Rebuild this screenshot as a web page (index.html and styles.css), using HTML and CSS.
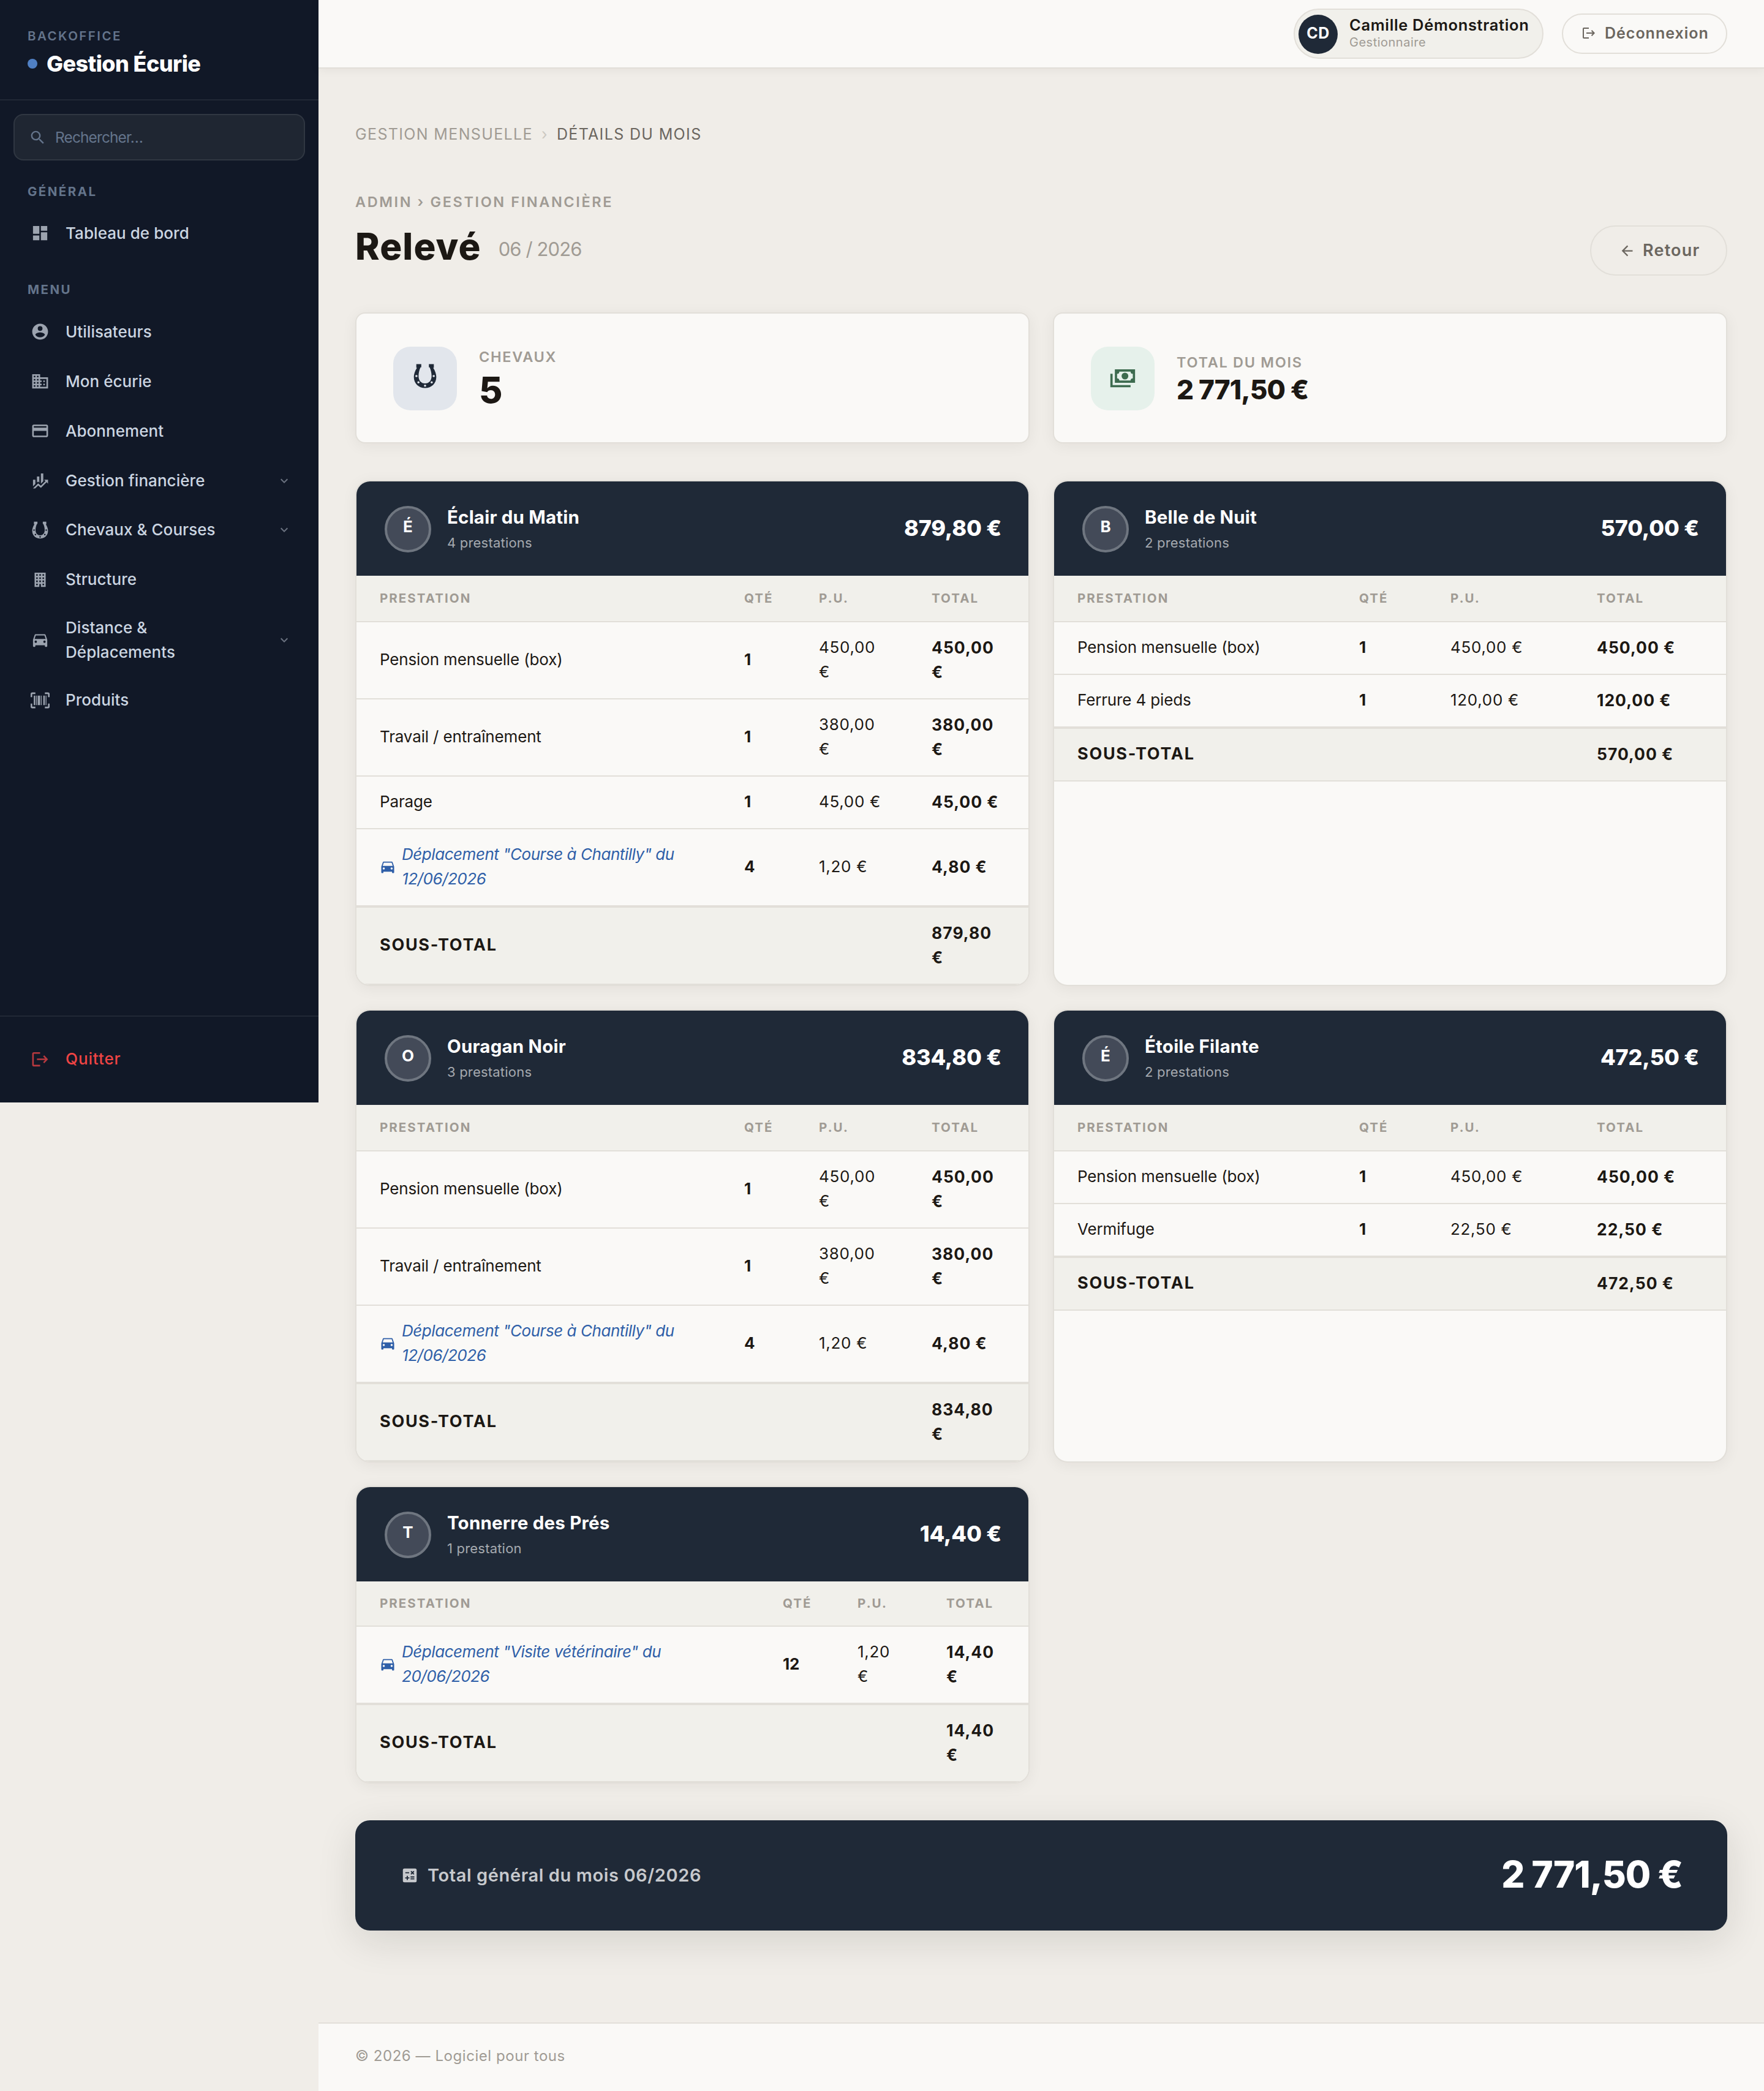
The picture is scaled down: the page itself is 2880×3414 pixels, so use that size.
FILE: index.html
```html
<!DOCTYPE html>
<html lang="fr">
<head>
    <meta charset="UTF-8">
    <meta name="viewport" content="width=device-width, initial-scale=1.0">
    <title>Relevé 06/2026 - Gestion Écurie</title>
    <link rel="stylesheet" href="styles.css">
</head>
<body>
    <!-- Icon set -->
    <svg class="sprite" aria-hidden="true">
        <symbol id="i-search" viewBox="0 0 24 24"><path d="M9.5,3A6.5,6.5 0 0,1 16,9.5C16,11.11 15.41,12.59 14.44,13.73L14.71,14H15.5L20.5,19L19,20.5L14,15.5V14.71L13.73,14.44C12.59,15.41 11.11,16 9.5,16A6.5,6.5 0 0,1 3,9.5A6.5,6.5 0 0,1 9.5,3M9.5,5C7,5 5,7 5,9.5C5,12 7,14 9.5,14C12,14 14,12 14,9.5C14,7 12,5 9.5,5Z"/></symbol>
        <symbol id="i-dashboard" viewBox="0 0 24 24"><path d="M13,3V9H21V3M13,21H21V11H13M3,21H11V15H3M3,13H11V3H3V13Z"/></symbol>
        <symbol id="i-account" viewBox="0 0 24 24"><path d="M12,19.2C9.5,19.2 7.29,17.92 6,16C6.03,14 10,12.9 12,12.9C14,12.9 17.97,14 18,16C16.71,17.92 14.5,19.2 12,19.2M12,5A3,3 0 0,1 15,8A3,3 0 0,1 12,11A3,3 0 0,1 9,8A3,3 0 0,1 12,5M12,2A10,10 0 0,0 2,12A10,10 0 0,0 12,22A10,10 0 0,0 22,12C22,6.47 17.5,2 12,2Z"/></symbol>
        <symbol id="i-domain" viewBox="0 0 24 24"><path d="M18,15H16V17H18M18,11H16V13H18M20,19H12V17H14V15H12V13H14V11H12V9H20M10,7H8V5H10M10,11H8V9H10M10,15H8V13H10M10,19H8V17H10M6,7H4V5H6M6,11H4V9H6M6,15H4V13H6M6,19H4V17H6M12,7V3H2V21H22V7H12Z"/></symbol>
        <symbol id="i-card" viewBox="0 0 24 24"><path d="M20,8H4V6H20M20,18H4V12H20M20,4H4C2.89,4 2,4.89 2,6V18C2,19.1 2.9,20 4,20H20C21.1,20 22,19.1 22,18V6C22,4.89 21.1,4 20,4Z"/></symbol>
        <symbol id="i-finance" viewBox="0 0 24 24"><path d="M6,16.5L3,19.44V11H6M11,14.66L9.43,13.32L8,14.64V7H11M16,13L13,16V3H16M18.81,12.81L17,11H22V16L20.21,14.21L13,21.36L9.53,18.34L5.75,22H3L9.47,15.66L13,18.64"/></symbol>
        <symbol id="i-horseshoe" viewBox="0 0 24 24"><path fill-rule="evenodd" d="M4.2,1.4H8.6V4.2H7.9C6.8,6.8 6.2,9.4 6.2,12C6.2,15.8 8.4,18.6 12,18.6C15.6,18.6 17.8,15.8 17.8,12C17.8,9.4 17.2,6.8 16.1,4.2H15.4V1.4H19.8V4.6H19.2C21,7.4 22,10.2 22,12.8C22,18.6 17.8,22.6 12,22.6C6.2,22.6 2,18.6 2,12.8C2,10.2 3,7.4 4.8,4.6H4.2ZM4.3,11A1,1 0 0,0 4.3,13A1,1 0 0,0 4.3,11ZM19.7,11A1,1 0 0,0 19.7,13A1,1 0 0,0 19.7,11ZM6.1,16.6A1,1 0 0,0 6.1,18.6A1,1 0 0,0 6.1,16.6ZM17.9,16.6A1,1 0 0,0 17.9,18.6A1,1 0 0,0 17.9,16.6ZM12,19.6A1,1 0 0,0 12,21.6A1,1 0 0,0 12,19.6Z"/></symbol>
        <symbol id="i-building" viewBox="0 0 24 24"><path d="M5,3V21H11V17.5H13V21H19V3H5M7,5H9V7H7V5M11,5H13V7H11V5M15,5H17V7H15V5M7,9H9V11H7V9M11,9H13V11H11V9M15,9H17V11H15V9M7,13H9V15H7V13M11,13H13V15H11V13M15,13H17V15H15V13M7,17H9V19H7V17M15,17H17V19H15V17Z"/></symbol>
        <symbol id="i-car" viewBox="0 0 24 24"><path d="M5,11L6.5,6.5H17.5L19,11M17.5,16A1.5,1.5 0 0,1 16,14.5A1.5,1.5 0 0,1 17.5,13A1.5,1.5 0 0,1 19,14.5A1.5,1.5 0 0,1 17.5,16M6.5,16A1.5,1.5 0 0,1 5,14.5A1.5,1.5 0 0,1 6.5,13A1.5,1.5 0 0,1 8,14.5A1.5,1.5 0 0,1 6.5,16M18.92,6C18.72,5.42 18.16,5 17.5,5H6.5C5.84,5 5.28,5.42 5.08,6L3,12V20A1,1 0 0,0 4,21H5A1,1 0 0,0 6,20V19H18V20A1,1 0 0,0 19,21H20A1,1 0 0,0 21,20V12L18.92,6Z"/></symbol>
        <symbol id="i-barcode" viewBox="0 0 24 24"><path d="M4,6H6V18H4V6M7,6H8V18H7V6M9,6H12V18H9V6M13,6H14V18H13V6M16,6H18V18H16V6M19,6H20V18H19V6M2,4V8H0V4A2,2 0 0,1 2,2H6V4H2M22,2A2,2 0 0,1 24,4V8H22V4H18V2H22M2,16V20H6V22H2A2,2 0 0,1 0,20V16H2M22,20V16H24V20A2,2 0 0,1 22,22H18V20H22Z"/></symbol>
        <symbol id="i-chevron" viewBox="0 0 24 24"><path d="M7.41,8.58L12,13.17L16.59,8.58L18,10L12,16L6,10L7.41,8.58Z"/></symbol>
        <symbol id="i-logout" viewBox="0 0 24 24"><path d="M12,3V5H4V19H12V21H4A2,2 0 0,1 2,19V5A2,2 0 0,1 4,3M17.2,7L22,12L17.2,17L15.8,15.6L18.3,13H8V11H18.3L15.8,8.4Z"/></symbol>
        <symbol id="i-back" viewBox="0 0 24 24"><path d="M20,11V13H8L13.5,18.5L12.08,19.92L4.16,12L12.08,4.08L13.5,5.5L8,11H20Z"/></symbol>
        <symbol id="i-cash" viewBox="0 0 24 24"><path d="M5,6H23V18H5V6M14,9A3,3 0 0,1 17,12A3,3 0 0,1 14,15A3,3 0 0,1 11,12A3,3 0 0,1 14,9M9,8A2,2 0 0,1 7,10V14A2,2 0 0,1 9,16H19A2,2 0 0,1 21,14V10A2,2 0 0,1 19,8H9M1,10H3V20H19V22H1V10Z"/></symbol>
        <symbol id="i-calc" viewBox="0 0 24 24"><path fill-rule="evenodd" d="M5,3H19A2,2 0 0,1 21,5V19A2,2 0 0,1 19,21H5A2,2 0 0,1 3,19V5A2,2 0 0,1 5,3ZM6.2,7.7V9.2H11.2V7.7ZM13,15.7V17.2H18V15.7ZM13,13.2V14.7H18V13.2ZM8,18H9.5V16H11.5V14.5H9.5V12.5H8V14.5H6V16H8ZM14.1,10.9L15.5,9.5L16.9,10.9L18,9.9L16.5,8.5L18,7.1L16.9,6L15.5,7.4L14.1,6L13,7.1L14.5,8.5L13,9.9Z"/></symbol>
    </svg>

    <div class="layout">
        <aside class="sidebar">
            <div class="brand">
                <div class="brand-label">Backoffice</div>
                <div class="brand-name"><span class="brand-dot"></span>Gestion Écurie</div>
            </div>

            <div class="search">
                <svg class="icon"><use href="#i-search"/></svg>
                <span>Rechercher…</span>
            </div>

            <div class="nav-label">Général</div>
            <nav class="nav">
                <a class="nav-item"><svg class="icon"><use href="#i-dashboard"/></svg><span>Tableau de bord</span></a>
            </nav>

            <div class="nav-label nav-label-menu">Menu</div>
            <nav class="nav">
                <a class="nav-item"><svg class="icon"><use href="#i-account"/></svg><span>Utilisateurs</span></a>
                <a class="nav-item"><svg class="icon"><use href="#i-domain"/></svg><span>Mon écurie</span></a>
                <a class="nav-item"><svg class="icon"><use href="#i-card"/></svg><span>Abonnement</span></a>
                <a class="nav-item"><svg class="icon"><use href="#i-finance"/></svg><span>Gestion financière</span><svg class="chevron"><use href="#i-chevron"/></svg></a>
                <a class="nav-item"><svg class="icon"><use href="#i-horseshoe"/></svg><span>Chevaux &amp; Courses</span><svg class="chevron"><use href="#i-chevron"/></svg></a>
                <a class="nav-item"><svg class="icon"><use href="#i-building"/></svg><span>Structure</span></a>
                <a class="nav-item"><svg class="icon"><use href="#i-car"/></svg><span>Distance &amp;<br>Déplacements</span><svg class="chevron"><use href="#i-chevron"/></svg></a>
                <a class="nav-item"><svg class="icon"><use href="#i-barcode"/></svg><span>Produits</span></a>
            </nav>

            <div class="sidebar-footer">
                <a class="nav-item quit"><svg class="icon"><use href="#i-logout"/></svg><span>Quitter</span></a>
            </div>
        </aside>

        <div class="main">
            <header class="topbar">
                <div class="user-pill">
                    <div class="user-avatar">CD</div>
                    <div class="user-info">
                        <div class="user-name">Camille Démonstration</div>
                        <div class="user-role">Gestionnaire</div>
                    </div>
                </div>
                <a class="logout"><svg><use href="#i-logout"/></svg><span>Déconnexion</span></a>
            </header>

            <main class="content">
                <div class="breadcrumb">
                    <span>Gestion mensuelle</span>
                    <span class="sep">›</span>
                    <span class="current">Détails du mois</span>
                </div>

                <div class="page-header">
                    <div>
                        <div class="page-path">Admin › Gestion financière</div>
                        <h1 class="page-title">Relevé <small>06 / 2026</small></h1>
                    </div>
                    <a class="btn-back"><svg><use href="#i-back"/></svg>Retour</a>
                </div>

                <div class="stats">
                    <div class="stat">
                        <div class="stat-icon"><svg><use href="#i-horseshoe"/></svg></div>
                        <div>
                            <div class="stat-label">Chevaux</div>
                            <div class="stat-value">5</div>
                        </div>
                    </div>
                    <div class="stat">
                        <div class="stat-icon green"><svg><use href="#i-cash"/></svg></div>
                        <div>
                            <div class="stat-label">Total du mois</div>
                            <div class="stat-value amount">2 771,50 €</div>
                        </div>
                    </div>
                </div>

                <div class="horses">
                    <section class="horse">
                        <div class="horse-head">
                            <div class="horse-avatar">É</div>
                            <div class="horse-info">
                                <div class="horse-name">Éclair du Matin</div>
                                <div class="horse-count">4 prestations</div>
                            </div>
                            <div class="horse-total">879,80 €</div>
                        </div>
                        <table class="lines">
                            <thead><tr><th>Prestation</th><th class="qty">Qté</th><th class="price">P.U.</th><th class="total">Total</th></tr></thead>
                            <tbody>
                                <tr><td>Pension mensuelle (box)</td><td>1</td><td>450,00 €</td><td>450,00 €</td></tr>
                                <tr><td>Travail / entraînement</td><td>1</td><td>380,00 €</td><td>380,00 €</td></tr>
                                <tr><td>Parage</td><td>1</td><td>45,00 €</td><td>45,00 €</td></tr>
                                <tr><td><div class="trip"><svg><use href="#i-car"/></svg><span>Déplacement "Course à Chantilly" du 12/06/2026</span></div></td><td>4</td><td>1,20 €</td><td>4,80 €</td></tr>
                            </tbody>
                            <tfoot><tr><td colspan="3">Sous-total</td><td>879,80 €</td></tr></tfoot>
                        </table>
                    </section>

                    <section class="horse">
                        <div class="horse-head">
                            <div class="horse-avatar">B</div>
                            <div class="horse-info">
                                <div class="horse-name">Belle de Nuit</div>
                                <div class="horse-count">2 prestations</div>
                            </div>
                            <div class="horse-total">570,00 €</div>
                        </div>
                        <table class="lines lines-wide">
                            <thead><tr><th>Prestation</th><th class="qty">Qté</th><th class="price">P.U.</th><th class="total">Total</th></tr></thead>
                            <tbody>
                                <tr><td>Pension mensuelle (box)</td><td>1</td><td>450,00 €</td><td>450,00 €</td></tr>
                                <tr><td>Ferrure 4 pieds</td><td>1</td><td>120,00 €</td><td>120,00 €</td></tr>
                            </tbody>
                            <tfoot><tr><td colspan="3">Sous-total</td><td>570,00 €</td></tr></tfoot>
                        </table>
                    </section>

                    <section class="horse">
                        <div class="horse-head">
                            <div class="horse-avatar">O</div>
                            <div class="horse-info">
                                <div class="horse-name">Ouragan Noir</div>
                                <div class="horse-count">3 prestations</div>
                            </div>
                            <div class="horse-total">834,80 €</div>
                        </div>
                        <table class="lines">
                            <thead><tr><th>Prestation</th><th class="qty">Qté</th><th class="price">P.U.</th><th class="total">Total</th></tr></thead>
                            <tbody>
                                <tr><td>Pension mensuelle (box)</td><td>1</td><td>450,00 €</td><td>450,00 €</td></tr>
                                <tr><td>Travail / entraînement</td><td>1</td><td>380,00 €</td><td>380,00 €</td></tr>
                                <tr><td><div class="trip"><svg><use href="#i-car"/></svg><span>Déplacement "Course à Chantilly" du 12/06/2026</span></div></td><td>4</td><td>1,20 €</td><td>4,80 €</td></tr>
                            </tbody>
                            <tfoot><tr><td colspan="3">Sous-total</td><td>834,80 €</td></tr></tfoot>
                        </table>
                    </section>

                    <section class="horse">
                        <div class="horse-head">
                            <div class="horse-avatar">É</div>
                            <div class="horse-info">
                                <div class="horse-name">Étoile Filante</div>
                                <div class="horse-count">2 prestations</div>
                            </div>
                            <div class="horse-total">472,50 €</div>
                        </div>
                        <table class="lines lines-wide">
                            <thead><tr><th>Prestation</th><th class="qty">Qté</th><th class="price">P.U.</th><th class="total">Total</th></tr></thead>
                            <tbody>
                                <tr><td>Pension mensuelle (box)</td><td>1</td><td>450,00 €</td><td>450,00 €</td></tr>
                                <tr><td>Vermifuge</td><td>1</td><td>22,50 €</td><td>22,50 €</td></tr>
                            </tbody>
                            <tfoot><tr><td colspan="3">Sous-total</td><td>472,50 €</td></tr></tfoot>
                        </table>
                    </section>

                    <section class="horse">
                        <div class="horse-head">
                            <div class="horse-avatar">T</div>
                            <div class="horse-info">
                                <div class="horse-name">Tonnerre des Prés</div>
                                <div class="horse-count">1 prestation</div>
                            </div>
                            <div class="horse-total">14,40 €</div>
                        </div>
                        <table class="lines lines-narrow">
                            <thead><tr><th>Prestation</th><th class="qty">Qté</th><th class="price">P.U.</th><th class="total">Total</th></tr></thead>
                            <tbody>
                                <tr><td><div class="trip"><svg><use href="#i-car"/></svg><span>Déplacement "Visite vétérinaire" du 20/06/2026</span></div></td><td>12</td><td>1,20 €</td><td>14,40 €</td></tr>
                            </tbody>
                            <tfoot><tr><td colspan="3">Sous-total</td><td>14,40 €</td></tr></tfoot>
                        </table>
                    </section>
                </div>

                <div class="grand-total">
                    <div class="grand-label"><svg><use href="#i-calc"/></svg>Total général du mois 06/2026</div>
                    <div class="grand-value">2 771,50 €</div>
                </div>
            </main>

            <footer class="footer">© 2026 — Logiciel pour tous</footer>
        </div>
    </div>
</body>
</html>
```
FILE: styles.css
```css
:root {
    --bg: #f0ede8;
    --surface: #faf9f7;
    --surface-2: #f1f0eb;
    --border: #e2dfd9;
    --dark: #1f2937;
    --sidebar: #111827;
    --text: #1c1814;
    --text-mid: #6b665f;
    --text-muted: #a09b94;
    --blue: #2f5fa8;
    --shadow: 0 4px 24px rgba(28, 24, 20, 0.06);
}

* {
    box-sizing: border-box;
    margin: 0;
    padding: 0;
}

body {
    font-family: Inter, "DejaVu Sans", sans-serif;
    font-size: 26px;
    line-height: 40px;
    background: var(--bg);
    color: var(--text);
}

svg {
    display: block;
    flex-shrink: 0;
    fill: currentColor;
}

.sprite {
    display: none;
}

.layout {
    display: flex;
    align-items: flex-start;
}

/* Sidebar */
.sidebar {
    width: 520px;
    height: 1800px;
    flex-shrink: 0;
    display: flex;
    flex-direction: column;
    background: var(--sidebar);
}

.brand {
    height: 164px;
    padding: 46px 45px 0;
    border-bottom: 2px solid rgba(255, 255, 255, 0.07);
}

.brand-label {
    font-size: 20.5px;
    font-weight: 600;
    line-height: 25px;
    letter-spacing: 2.45px;
    text-transform: uppercase;
    color: #64748b;
}

.brand-name {
    display: flex;
    align-items: center;
    gap: 15px;
    margin-top: 13px;
    font-size: 36px;
    font-weight: 800;
    line-height: 40px;
    letter-spacing: -0.6px;
    color: #fff;
}

.brand-dot {
    width: 16px;
    height: 16px;
    border-radius: 50%;
    background: #5080c4;
}

.search {
    display: flex;
    align-items: center;
    gap: 14px;
    height: 76px;
    margin: 22px 22px 0;
    padding: 0 22px 0 23px;
    border: 2px solid rgba(255, 255, 255, 0.08);
    border-radius: 16px;
    background: #1f2632;
    color: #64748b;
    font-size: 24.5px;
    letter-spacing: -0.9px;
}

.search .icon {
    width: 29px;
    height: 29px;
}

.nav-label {
    margin: 35.5px 45px 15px;
    font-size: 20.5px;
    font-weight: 700;
    line-height: 30px;
    letter-spacing: 2.45px;
    text-transform: uppercase;
    color: #64748b;
}

.nav-label-menu {
    margin-top: 35px;
}

.nav-item {
    display: flex;
    align-items: center;
    gap: 26px;
    min-height: 76.9px;
    margin-bottom: 4px;
    padding: 16px 44px 16px 50px;
    font-weight: 500;
    letter-spacing: 0.05px;
    color: #cbd5e1;
}

.nav-item .icon {
    width: 31px;
    height: 31px;
    color: #9ca3af;
}

.chevron {
    width: 24px;
    height: 24px;
    margin-left: auto;
    color: #6b7280;
}

.sidebar-footer {
    height: 142px;
    margin-top: auto;
    padding-top: 31px;
    border-top: 2px solid rgba(255, 255, 255, 0.07);
}

.nav-item.quit {
    letter-spacing: 0.9px;
    color: #ef4444;
}

.quit .icon {
    color: #b8393f;
}

/* Topbar */
.main {
    flex: 1;
    min-width: 0;
    height: 3414px;
    display: flex;
    flex-direction: column;
}

.topbar {
    display: flex;
    justify-content: flex-end;
    align-items: center;
    gap: 30px;
    height: 112px;
    padding: 0 60px;
    background: var(--surface);
    border-bottom: 2px solid var(--border);
    box-shadow: 0 2px 16px rgba(28, 24, 20, 0.06);
}

.user-pill {
    display: flex;
    align-items: center;
    gap: 19px;
    width: 408px;
    height: 82px;
    padding: 0 6px;
    border: 2px solid var(--border);
    border-radius: 41px;
    background: var(--surface-2);
}

.user-avatar {
    width: 64px;
    height: 64px;
    margin-top: 2px;
    border-radius: 50%;
    background: var(--dark);
    color: #fff;
    font-size: 25px;
    font-weight: 700;
    line-height: 60px;
    letter-spacing: 0.5px;
    text-align: center;
}

.user-name {
    font-size: 25.5px;
    font-weight: 600;
    line-height: 28px;
    letter-spacing: 0.65px;
    white-space: nowrap;
}

.user-role {
    font-size: 20px;
    line-height: 28px;
    letter-spacing: 0.5px;
    color: var(--text-muted);
}

.logout {
    display: flex;
    align-items: center;
    gap: 14px;
    width: 270px;
    height: 66px;
    padding: 0 0 3px 30px;
    border: 2px solid var(--border);
    border-radius: 33px;
    color: var(--text-mid);
    font-size: 25px;
    font-weight: 600;
    letter-spacing: 1px;
}

.logout svg {
    width: 24px;
    height: 24px;
}

/* Content */
.content {
    padding: 92px 60px 0;
}

.breadcrumb {
    display: flex;
    gap: 14px;
    font-size: 25px;
    line-height: 30px;
    letter-spacing: 1.35px;
    text-transform: uppercase;
    color: var(--text-muted);
}

.breadcrumb .sep {
    color: #ccc8c1;
}

.breadcrumb .current {
    color: var(--text-mid);
}

.page-header {
    display: flex;
    justify-content: space-between;
    align-items: flex-end;
    margin-top: 80.5px;
}

.page-path {
    font-size: 23.5px;
    font-weight: 600;
    line-height: 30px;
    letter-spacing: 2.6px;
    text-transform: uppercase;
    color: var(--text-muted);
}

.page-title {
    display: flex;
    align-items: center;
    gap: 28px;
    margin: 27.5px 0 18px;
    font-size: 60px;
    font-weight: 800;
    line-height: 60px;
    letter-spacing: 1.1px;
}

.page-title small {
    padding-top: 9px;
    font-size: 31px;
    font-weight: 400;
    line-height: 40px;
    letter-spacing: -0.9px;
    color: var(--text-muted);
}

.btn-back {
    display: flex;
    align-items: center;
    gap: 12px;
    width: 224px;
    height: 82px;
    padding-left: 45px;
    border: 2px solid var(--border);
    border-radius: 41px;
    color: var(--text-mid);
    font-size: 27px;
    font-weight: 600;
    letter-spacing: 1.2px;
}

.btn-back svg {
    width: 27px;
    height: 27px;
}

.stats,
.horses {
    display: grid;
    grid-template-columns: 1fr 1fr;
    gap: 38px;
    margin-top: 60px;
}

.stat {
    display: flex;
    align-items: center;
    gap: 36px;
    height: 214px;
    padding: 0 60px;
    border: 2px solid var(--border);
    border-radius: 16px;
    background: var(--surface);
    box-shadow: var(--shadow);
}

.stat-icon {
    width: 104px;
    height: 104px;
    margin-top: 2px;
    padding: 26px 30px;
    border-radius: 28px;
    background: #e2e6ec;
    color: var(--dark);
}

.stat-icon svg {
    width: 44px;
    height: 44px;
}

.stat-icon.green {
    background: #e6f1eb;
    color: #3d6b4f;
}

.stat-label {
    font-size: 23.5px;
    font-weight: 600;
    line-height: 30px;
    letter-spacing: 1.7px;
    text-transform: uppercase;
    color: var(--text-muted);
}

.stat-value {
    margin-top: 9px;
    font-size: 59px;
    font-weight: 800;
    line-height: 60px;
}

.stat-value.amount {
    font-size: 44px;
    line-height: 41px;
    letter-spacing: -0.9px;
}

/* Horse cards */
.horse {
    overflow: hidden;
    border: 2px solid var(--border);
    border-radius: 24px;
    background: var(--surface);
    box-shadow: var(--shadow);
}

.horse-head {
    display: flex;
    align-items: center;
    height: 154px;
    padding: 0 44px 0 46px;
    background: var(--dark);
    color: #fff;
}

.horse-avatar {
    width: 76px;
    height: 76px;
    margin: 2px 26px 0 0;
    border: 4px solid #6f7680;
    border-radius: 50%;
    background: #434a58;
    font-weight: 700;
    line-height: 60px;
    text-align: center;
}

.horse-info {
    padding-top: 3px;
}

.horse-name {
    font-size: 29.5px;
    font-weight: 700;
    line-height: 30px;
    letter-spacing: 0.2px;
}

.horse-count {
    margin-top: 12px;
    font-size: 22px;
    line-height: 30px;
    letter-spacing: 0.2px;
    color: #a5a9af;
}

.horse-total {
    margin: -3px 0 0 auto;
    font-size: 36px;
    font-weight: 800;
    letter-spacing: -0.2px;
}

.lines {
    width: 100%;
    table-layout: fixed;
    border-spacing: 0;
}

.lines .qty { width: 122px; }
.lines .price { width: 184px; }
.lines .total { width: 196px; }

.lines-wide .qty { width: 149px; }
.lines-wide .price { width: 239px; }
.lines-wide .total { width: 249px; }

.lines-narrow .price { width: 145px; }
.lines-narrow .total { width: 172px; }

.lines th {
    padding: 22px 38px;
    border-bottom: 2px solid var(--border);
    background: var(--surface-2);
    color: var(--text-muted);
    font-size: 20.5px;
    font-weight: 700;
    line-height: 30px;
    letter-spacing: 2.05px;
    text-align: left;
    text-transform: uppercase;
}

.lines-narrow th {
    padding: 21px 38px;
}

.lines td {
    padding: 20.5px 38px 23.5px;
    border-bottom: 2px solid var(--border);
    letter-spacing: -0.15px;
}

.lines tbody td:nth-child(2),
.lines tbody td:nth-child(4) {
    font-weight: 700;
}

.lines tbody td:nth-child(3) {
    letter-spacing: 0.7px;
}

.lines td:last-child {
    font-size: 26.5px;
    letter-spacing: 1px;
}

.lines tfoot td {
    border-top: 2px solid var(--border);
    background: var(--surface-2);
    font-weight: 700;
}

.lines tfoot td:first-child {
    font-size: 27px;
    letter-spacing: 1.7px;
    text-transform: uppercase;
}

.trip {
    display: flex;
    align-items: center;
    gap: 9px;
    font-style: italic;
    letter-spacing: -0.45px;
    color: var(--blue);
}

.trip svg {
    width: 28px;
    height: 28px;
    margin-left: -1px;
}

/* Grand total */
.grand-total {
    display: flex;
    justify-content: space-between;
    align-items: center;
    height: 180px;
    margin-top: 60px;
    padding: 0 73px 0 74px;
    border-radius: 24px;
    background: var(--dark);
    box-shadow: 0 16px 64px rgba(28, 24, 20, 0.12);
}

.grand-label {
    display: flex;
    align-items: center;
    gap: 14px;
    font-size: 29px;
    font-weight: 600;
    letter-spacing: 0.6px;
    color: #c7c9cd;
}

.grand-label svg {
    width: 30px;
    height: 30px;
}

.grand-value {
    margin-top: -4px;
    font-size: 60px;
    font-weight: 800;
    letter-spacing: -1px;
    color: #fff;
}

.footer {
    height: 112px;
    margin-top: auto;
    padding: 33px 60px;
    border-top: 2px solid var(--border);
    background: var(--surface);
    color: var(--text-muted);
    font-size: 24px;
    letter-spacing: 0.55px;
}
```
